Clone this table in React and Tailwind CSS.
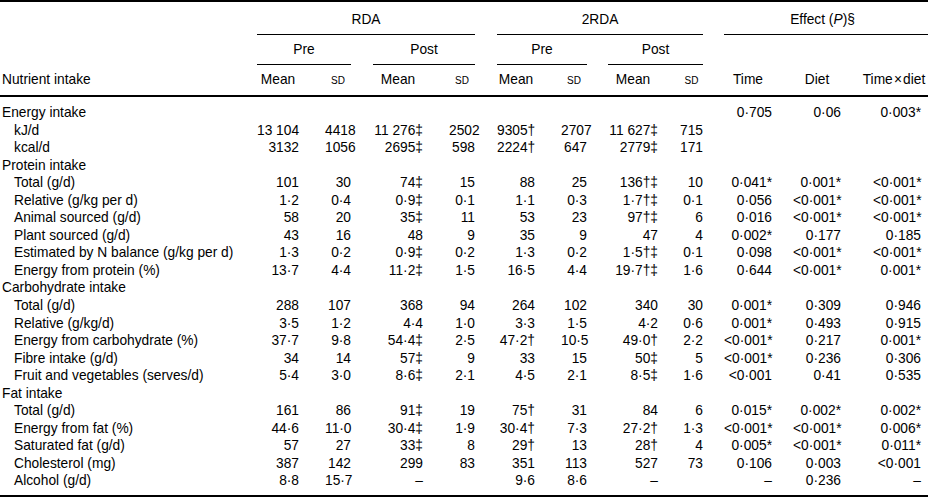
// App.jsx — Nutrient intake table, RDA vs 2RDA, pre/post.
// Columns: label + 11 numeric columns + a thin trailing column so the rules reach the edge.

// left gap of each numeric column (spacer before the number box)
const SP = ['pl-0', 'pl-[26px]', 'pl-[22px]', 'pl-[26px]', 'pl-[22px]', 'pl-[26px]', 'pl-[21px]', 'pl-[22px]', 'pl-[21px]', 'pl-[21px]', 'pl-[32px]'];

// [label, indented, ...11 values]
const ROWS = [
  ['Energy intake', 0, '', '', '', '', '', '', '', '', '0·705', '0·06', '0·003*'],
  ['kJ/d', 1, '13 104', '4418', '11 276‡', '2502', '9305†', '2707', '11 627‡', '715'],
  ['kcal/d', 1, '3132', '1056', '2695‡', '598', '2224†', '647', '2779‡', '171'],
  ['Protein intake', 0],
  ['Total (g/d)', 1, '101', '30', '74‡', '15', '88', '25', '136†‡', '10', '0·041*', '0·001*', '<0·001*'],
  ['Relative (g/kg per d)', 1, '1·2', '0·4', '0·9‡', '0·1', '1·1', '0·3', '1·7†‡', '0·1', '0·056', '<0·001*', '<0·001*'],
  ['Animal sourced (g/d)', 1, '58', '20', '35‡', '11', '53', '23', '97†‡', '6', '0·016', '<0·001*', '<0·001*'],
  ['Plant sourced (g/d)', 1, '43', '16', '48', '9', '35', '9', '47', '4', '0·002*', '0·177', '0·185'],
  ['Estimated by N balance (g/kg per d)', 1, '1·3', '0·2', '0·9‡', '0·2', '1·3', '0·2', '1·5†‡', '0·1', '0·098', '<0·001*', '<0·001*'],
  ['Energy from protein (%)', 1, '13·7', '4·4', '11·2‡', '1·5', '16·5', '4·4', '19·7†‡', '1·6', '0·644', '<0·001*', '0·001*'],
  ['Carbohydrate intake', 0],
  ['Total (g/d)', 1, '288', '107', '368', '94', '264', '102', '340', '30', '0·001*', '0·309', '0·946'],
  ['Relative (g/kg/d)', 1, '3·5', '1·2', '4·4', '1·0', '3·3', '1·5', '4·2', '0·6', '0·001*', '0·493', '0·915'],
  ['Energy from carbohydrate (%)', 1, '37·7', '9·8', '54·4‡', '2·5', '47·2†', '10·5', '49·0†', '2·2', '<0·001*', '0·217', '0·001*'],
  ['Fibre intake (g/d)', 1, '34', '14', '57‡', '9', '33', '15', '50‡', '5', '<0·001*', '0·236', '0·306'],
  ['Fruit and vegetables (serves/d)', 1, '5·4', '3·0', '8·6‡', '2·1', '4·5', '2·1', '8·5‡', '1·6', '<0·001', '0·41', '0·535'],
  ['Fat intake', 0],
  ['Total (g/d)', 1, '161', '86', '91‡', '19', '75†', '31', '84', '6', '0·015*', '0·002*', '0·002*'],
  ['Energy from fat (%)', 1, '44·6', '11·0', '30·4‡', '1·9', '30·4†', '7·3', '27·2†', '1·3', '<0·001*', '<0·001*', '0·006*'],
  ['Saturated fat (g/d)', 1, '57', '27', '33‡', '8', '29†', '13', '28†', '4', '0·005*', '<0·001*', '0·011*'],
  ['Cholesterol (mg)', 1, '387', '142', '299', '83', '351', '113', '527', '73', '0·106', '0·003', '<0·001'],
  ['Alcohol (g/d)', 1, '8·8', '15·7', '–', '', '9·6', '8·6', '–', '', '–', '0·236', '–'],
];

const Sd = () => <span className="text-[10px]">SD</span>;

const SUB = [<>Mean</>, <Sd />, <>Mean</>, <Sd />, <>Mean</>, <Sd />, <>Mean</>, <Sd />, <>Time</>, <>Diet</>, <>Time{'\u200A'}×{'\u200A'}diet</>];

function Group({ span, sp, children, extra = '' }) {
  return (
    <div className={`${span} ${sp}`}>
      <div className={`border-b border-black pb-[6px] flex justify-center ${extra}`}>
        <div className="whitespace-nowrap">{children}</div>
      </div>
    </div>
  );
}

export default function App() {
  return (
    <div className="w-[928px] h-[498px] overflow-hidden bg-white text-black text-[13.75px] leading-4 font-['Liberation_Sans',Arial,sans-serif]">
      <div className="h-[2px] bg-black" />
      <div className="grid grid-cols-[257px_42px_52px_72px_52px_60px_52px_71px_45px_69px_69px_80px_7px]">
        {/* header row 1 */}
        <div className="pt-[10px]" />
        <Group span="col-span-4 pt-[10px]" sp="pl-0">RDA</Group>
        <Group span="col-span-4 pt-[10px]" sp="pl-[22px]">2RDA</Group>
        <Group span="col-span-4 pt-[10px]" sp="pl-[21px]" extra="pr-[7px]">
          Effect (<i>P</i>)§
        </Group>

        {/* header row 2 */}
        <div className="pt-[7px]" />
        <Group span="col-span-2 pt-[7px]" sp="pl-0">Pre</Group>
        <Group span="col-span-2 pt-[7px]" sp="pl-[22px]">Post</Group>
        <Group span="col-span-2 pt-[7px]" sp="pl-[22px]">Pre</Group>
        <Group span="col-span-2 pt-[7px]" sp="pl-[21px]">Post</Group>
        <div className="col-span-4" />

        {/* header row 3 */}
        <div className="pl-[2px] pt-[7px] pb-[6px] whitespace-nowrap">Nutrient intake</div>
        {SUB.map((s, i) => (
          <div key={i} className={`${SP[i]} ${i === 10 ? 'pr-[6px]' : ''} pt-[7px] pb-[6px] flex justify-center`}>
            <div className="whitespace-nowrap">{s}</div>
          </div>
        ))}
        <div />
        <div className="col-span-13 h-[2px] bg-black" />
        <div className="col-span-13 h-[7px]" />

        {/* body */}
        {ROWS.map((r, ri) => (
          <div key={ri} className="contents">
            <div className={`${r[1] ? 'pl-[14px]' : 'pl-[2px]'} h-[17.55px] leading-[17.55px] whitespace-nowrap`}>{r[0]}</div>
            {SP.map((sp, i) => (
              <div key={i} className={`${sp} h-[17.55px] leading-[17.55px] text-right whitespace-nowrap`}>
                {r[2 + i] || ''}
              </div>
            ))}
            <div />
          </div>
        ))}

        <div className="col-span-13 h-[5px]" />
        <div className="col-span-13 h-[2px] bg-black" />
      </div>
    </div>
  );
}
